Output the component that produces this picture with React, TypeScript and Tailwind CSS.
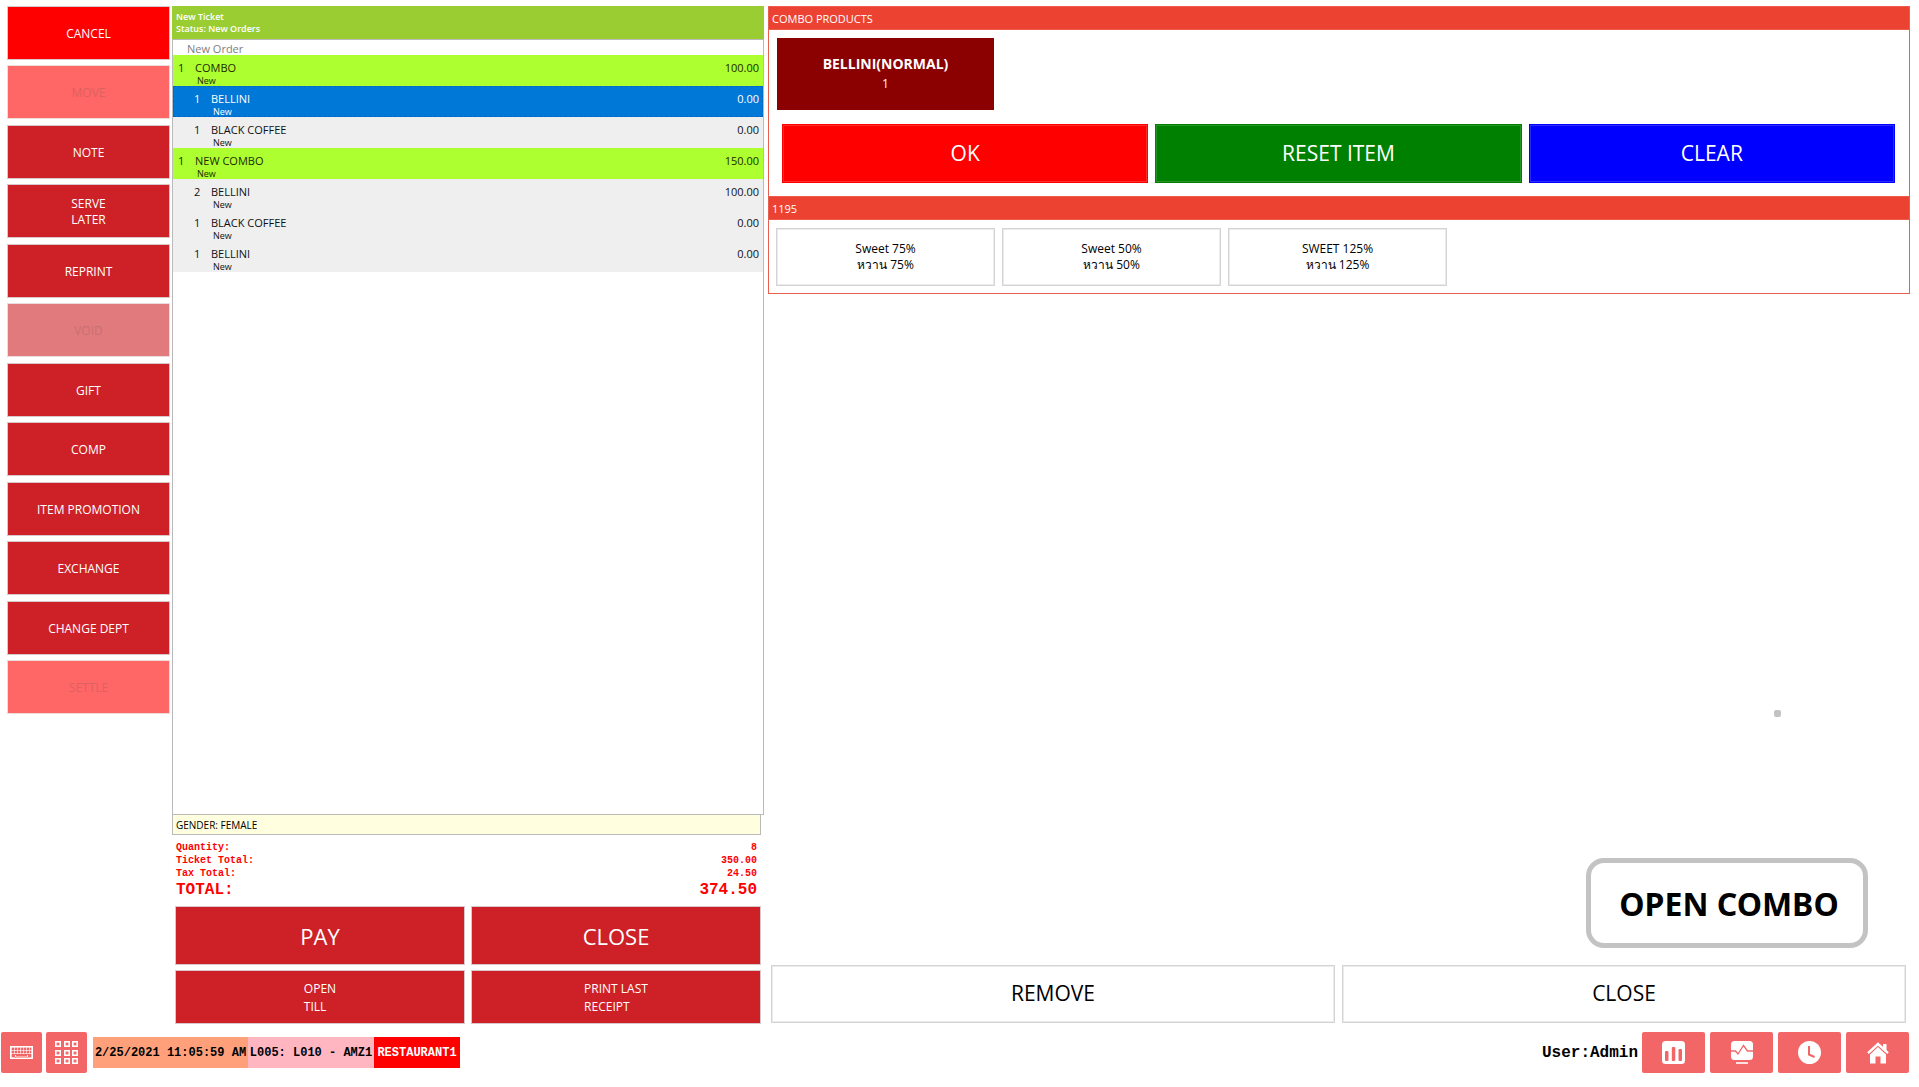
import React from "react";

type SideItem = { label: string; tone: "red" | "bright" | "faded" | "dim" };

const sideItems: SideItem[] = [
  { label: "CANCEL", tone: "bright" },
  { label: "MOVE", tone: "faded" },
  { label: "NOTE", tone: "red" },
  { label: "SERVE\nLATER", tone: "red" },
  { label: "REPRINT", tone: "red" },
  { label: "VOID", tone: "dim" },
  { label: "GIFT", tone: "red" },
  { label: "COMP", tone: "red" },
  { label: "ITEM PROMOTION", tone: "red" },
  { label: "EXCHANGE", tone: "red" },
  { label: "CHANGE DEPT", tone: "red" },
  { label: "SETTLE", tone: "faded" },
];

const tones: Record<SideItem["tone"], string> = {
  red: "bg-[#cd2127] text-white border-[#d9c8c9]",
  bright: "bg-[#ff0000] text-white border-[#d9c8c9]",
  faded: "bg-[#ff6666] text-[#dc6262] border-[#ecdcdc]",
  dim: "bg-[#e17a7d] text-[#c96f73] border-[#ecdcdc]",
};

type Order = { qty: number; name: string; price: string; kind: "combo" | "item" | "selected" };

const orders: Order[] = [
  { qty: 1, name: "COMBO", price: "100.00", kind: "combo" },
  { qty: 1, name: "BELLINI", price: "0.00", kind: "selected" },
  { qty: 1, name: "BLACK COFFEE", price: "0.00", kind: "item" },
  { qty: 1, name: "NEW COMBO", price: "150.00", kind: "combo" },
  { qty: 2, name: "BELLINI", price: "100.00", kind: "item" },
  { qty: 1, name: "BLACK COFFEE", price: "0.00", kind: "item" },
  { qty: 1, name: "BELLINI", price: "0.00", kind: "item" },
];

const orderStyles: Record<Order["kind"], string> = {
  combo: "bg-[#adff2f] text-[#1c2a05] border-transparent pl-1",
  item: "bg-[#efefef] text-[#111] border-transparent pl-5",
  selected: "bg-[#0078d7] text-white border-[#0067c6] pl-5",
};

const totals = [
  { label: "Quantity:", value: "8" },
  { label: "Ticket Total:", value: "350.00" },
  { label: "Tax Total:", value: "24.50" },
];

const sweetness = [
  ["Sweet 75%", "หวาน 75%"],
  ["Sweet 50%", "หวาน 50%"],
  ["SWEET 125%", "หวาน 125%"],
];

function Sidebar() {
  return (
    <nav className="flex h-[708px] w-[163px] shrink-0 flex-col justify-between">
      {sideItems.map((item) => (
        <button
          key={item.label}
          disabled={item.tone === "faded" || item.tone === "dim"}
          className={`h-[54px] whitespace-pre border pt-0.5 text-xs ${tones[item.tone]}`}
        >
          {item.label}
        </button>
      ))}
    </nav>
  );
}

function RedButton({ children, large }: { children: React.ReactNode; large?: boolean }) {
  return (
    <button
      className={`flex items-center justify-center border border-[#d9c8c9] bg-[#cd2127] pt-0.5 text-white ${
        large ? "h-[59px] text-[22px]" : "h-[54px] text-left text-xs leading-[18px]"
      }`}
    >
      <span>{children}</span>
    </button>
  );
}

function Ticket() {
  return (
    <section className="flex w-[592px] shrink-0 flex-col">
      <header className="h-[33px] bg-[#9acd32] px-1 pt-[5px] text-[9px] leading-3 font-semibold text-white">
        <p>New Ticket</p>
        <p>Status: New Orders</p>
      </header>
      <div className="flex-1 border border-[#bababa]">
        <p className="h-[15px] pl-3.5 text-[11px] leading-[18px] text-[#808080]">New Order</p>
        <ul>
          {orders.map((o, i) => (
            <li key={i} className={`flex h-[31px] border border-dashed pt-1 pr-[3px] ${orderStyles[o.kind]}`}>
              <span className="w-[17px] text-[11px] leading-4">{o.qty}</span>
              <div className="flex-1">
                <p className="text-[11px] leading-4">{o.name}</p>
                <p className="pl-0.5 text-[9px] leading-[9px]">New</p>
              </div>
              <span className="text-[11px] leading-4">{o.price}</span>
            </li>
          ))}
        </ul>
      </div>
      <p className="mr-[3px] h-5 border border-t-0 border-[#bababa] bg-[#ffffe0] pl-[3px] text-[10px] leading-5 text-black">
        GENDER: FEMALE
      </p>
      <dl className="mr-[7px] ml-1 pt-1.5 font-['Liberation_Mono',monospace] font-bold text-[#ff0000]">
        {totals.map((t) => (
          <div key={t.label} className="flex justify-between text-[10px] leading-[13px]">
            <dt>{t.label}</dt>
            <dd>{t.value}</dd>
          </div>
        ))}
        <div className="flex justify-between text-base leading-5">
          <dt>TOTAL:</dt>
          <dd>374.50</dd>
        </div>
      </dl>
      <div className="mt-1.5 mr-[3px] ml-[3px] grid grid-cols-2 gap-x-1.5 gap-y-[5px]">
        <RedButton large>PAY</RedButton>
        <RedButton large>CLOSE</RedButton>
        <RedButton>
          OPEN
          <br />
          TILL
        </RedButton>
        <RedButton>
          PRINT LAST
          <br />
          RECEIPT
        </RedButton>
      </div>
    </section>
  );
}

function PanelTitle({ children }: { children: React.ReactNode }) {
  return (
    <h2 className="h-6 border-y border-[#f05a4a] bg-[#ec4232] px-[3px] text-[11px] leading-[23px] text-white">
      {children}
    </h2>
  );
}

function ComboPanel() {
  return (
    <section className="border-x border-b border-[#e8614f]">
      <PanelTitle>COMBO PRODUCTS</PanelTitle>
      <div className="px-2 pt-2">
        <button className="flex h-[72px] w-[217px] flex-col items-center justify-center bg-[#8b0000] text-sm leading-5 text-white">
          <span className="font-bold">BELLINI(NORMAL)</span>
          <span className="text-xs leading-5">1</span>
        </button>
      </div>
      <div className="mt-3.5 mr-3.5 mb-[13px] ml-[13px] grid grid-cols-3 gap-[7px] text-[21px] text-white">
        <button className="h-[59px] border border-[#ff0000] bg-[#ff0000] inset-ring inset-ring-[#ff2b2b]">OK</button>
        <button className="h-[59px] border border-[#008000] bg-[#008000] inset-ring inset-ring-[#269326]">
          RESET ITEM
        </button>
        <button className="h-[59px] border border-[#0000ff] bg-[#0000ff] inset-ring inset-ring-[#2b2bff]">CLEAR</button>
      </div>
      <PanelTitle>1195</PanelTitle>
      <div className="flex gap-[7px] px-[7px] pt-2 pb-[7px]">
        {sweetness.map(([en, th]) => (
          <button
            key={en}
            className="h-[58px] w-[219px] border border-[#d4d4d4] bg-white text-xs leading-4 text-black inset-ring inset-ring-[#ebebeb]"
          >
            {en}
            <br />
            {th}
          </button>
        ))}
      </div>
    </section>
  );
}

function Main() {
  return (
    <main className="flex min-w-0 flex-1 flex-col">
      <ComboPanel />
      <div className="flex flex-1 flex-col items-end justify-end pb-[17px]">
        <span className="mr-[129px] mb-[141px] size-[7px] rounded-xs bg-[#c3c3c3]" />
        <p className="mr-[42px] flex h-[90px] w-[282px] items-center justify-center rounded-[18px] border-[5px] border-[#c3c3c3] pt-0.5 pl-1 font-['Noto_Sans',sans-serif] text-[32px] font-bold text-black">
          OPEN COMBO
        </p>
      </div>
      <div className="mr-1 mb-px ml-[3px] grid grid-cols-2 gap-[7px] text-[21px] text-black">
        {["REMOVE", "CLOSE"].map((label) => (
          <button key={label} className="h-[58px] border border-[#d4d4d4] bg-white inset-ring inset-ring-[#ebebeb]">
            {label}
          </button>
        ))}
      </div>
    </main>
  );
}

function KeyboardIcon() {
  return (
    <svg width="23" height="13" viewBox="0 0 23 13" fill="none" stroke="#fff">
      <rect x="0.5" y="0.5" width="22" height="12" />
      <path strokeOpacity="0.6" d="M1 1.500h21M1 4.500h21M1 7.500h21M1 11.500h4M18 11.500h4M1.500 1v11M4.500 1v7M7.500 1v7M10.500 1v7M13.500 1v7M16.500 1v7M19.500 1v7M21.500 1v11" />
      <path d="M5.500 9v2h12V9" strokeOpacity="0.9" />
    </svg>
  );
}

function KeypadIcon() {
  const cells = [0, 9, 17];
  return (
    <svg width="23" height="23" viewBox="0 0 23 23" fill="none" stroke="#fff" strokeWidth="1.600">
      {cells.map((y) => cells.map((x) => <rect key={`${x}-${y}`} x={x + 0.8} y={y + 0.8} width="4.400" height="4.400" />))}
    </svg>
  );
}

function ChartIcon() {
  return (
    <svg width="23" height="23" viewBox="0 0 23 23">
      <rect width="23" height="23" rx="3.500" fill="#fff" />
      <g fill="#f26667">
        <rect x="3" y="10" width="3.500" height="10" rx="1" />
        <rect x="9.800" y="6" width="3.500" height="14" rx="1" />
        <rect x="16.500" y="8" width="3.500" height="12" rx="1" />
      </g>
    </svg>
  );
}

function MonitorIcon() {
  return (
    <svg width="22" height="23" viewBox="0 0 22 23">
      <rect width="22" height="19" rx="3.500" fill="#fff" />
      <path d="M0 10h4.500L7 13l5.500-8.500 4 5.500H22" fill="none" stroke="#f26667" strokeWidth="1.300" />
      <path d="M5 22h12" stroke="#fff" strokeWidth="1.600" />
    </svg>
  );
}

function ClockIcon() {
  return (
    <svg width="23" height="23" viewBox="0 0 23 23">
      <circle cx="11.500" cy="11.500" r="11.500" fill="#fff" />
      <path d="M11 5v8.500l5.500 2.500" fill="none" stroke="#f26667" strokeWidth="2" />
    </svg>
  );
}

function HomeIcon() {
  return (
    <svg width="22" height="22" viewBox="0 0 22 22">
      <path d="M3 12.500 11 5l8 7.500V21.500h-5.500v-7h-5v7H3z" fill="#fff" />
      <path d="M16 2h3.500v7L16 6z" fill="#fff" />
      <path d="M1 13 11 3.500 21 13" fill="none" stroke="#f26667" strokeWidth="1.200" />
      <path d="M1 11.200 11 2l10 9.200" fill="none" stroke="#fff" strokeWidth="2.400" />
    </svg>
  );
}

function Footer() {
  const actions = [
    { name: "Reports", icon: <ChartIcon /> },
    { name: "Monitor", icon: <MonitorIcon /> },
    { name: "Time clock", icon: <ClockIcon /> },
    { name: "Home", icon: <HomeIcon /> },
  ];
  return (
    <footer className="flex items-center pr-2.5 pl-px font-['Liberation_Mono',monospace] font-bold text-black">
      <div className="flex gap-1">
        <button aria-label="Keyboard" className="flex size-[41px] items-center justify-center rounded-xs bg-[#f26667]">
          <KeyboardIcon />
        </button>
        <button aria-label="Keypad" className="flex size-[41px] items-center justify-center rounded-xs bg-[#f26667]">
          <KeypadIcon />
        </button>
      </div>
      <div className="ml-1.5 flex h-[31px] text-xs leading-8 whitespace-nowrap">
        <span className="w-[155px] bg-[#ffa07a] text-center">2/25/2021 11:05:59 AM</span>
        <span className="w-[126px] bg-[#ffb6c1] text-center">L005: L010 - AMZ1</span>
        <span className="w-[86px] bg-[#ff0000] text-center text-white">RESTAURANT1</span>
      </div>
      <span className="mr-1 ml-auto text-base">User:Admin</span>
      <div className="flex gap-[5px]">
        {actions.map((a) => (
          <button
            key={a.name}
            aria-label={a.name}
            className="flex h-[41px] w-[63px] items-center justify-center rounded-xs bg-[#f26667]"
          >
            {a.icon}
          </button>
        ))}
      </div>
    </footer>
  );
}

export default function App() {
  return (
    <div className="flex min-h-screen flex-col bg-white pt-1.5 pb-3.5 font-['Open_Sans','Noto_Sans',sans-serif]">
      <div className="flex flex-1 pr-[9px] pb-2 pl-[7px]">
        <Sidebar />
        <div className="ml-0.5 flex flex-1 gap-1">
          <Ticket />
          <Main />
        </div>
      </div>
      <Footer />
    </div>
  );
}
